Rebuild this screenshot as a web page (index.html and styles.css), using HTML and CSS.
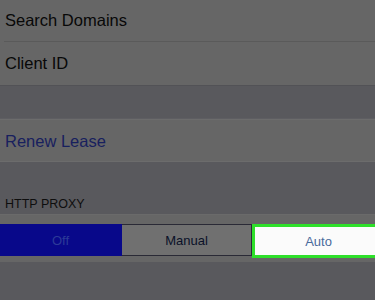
FILE: index.html
```html
<!DOCTYPE html>
<html lang="en">
<head>
<meta charset="UTF-8">
<meta name="viewport" content="width=device-width, initial-scale=1.0">
<title>Wi-Fi Settings</title>
<link rel="stylesheet" href="styles.css">
</head>
<body>

<!-- DHCP rows -->
<div class="group">
    <div class="row">Search Domains</div>
    <div class="row last">Client ID</div>
</div>

<div class="spacer"></div>

<div class="group boxed">
    <div class="row link">Renew Lease</div>
</div>

<!-- Proxy -->
<div class="section-title">HTTP PROXY</div>

<div class="group proxy-row">
    <div class="segmented">
        <div class="segment selected">Off</div>
        <div class="segment manual">Manual</div>
        <div class="segment highlight">Auto</div>
    </div>
</div>

</body>
</html>
```
FILE: styles.css
```css
* {
    box-sizing: border-box;
    margin: 0;
    padding: 0;
}

body {
    background-color: #59595d;
    font-family: "Liberation Sans", Arial, sans-serif;
    color: #080808;
    width: 375px;
    height: 300px;
    overflow: hidden;
}

.group {
    background-color: #666666;
}

.row {
    height: 42px;
    margin-left: 4px;
    padding-left: 1px;
    display: flex;
    align-items: center;
    font-size: 16.5px;
    border-bottom: 1px solid #5a5a5a;
}

.row.last {
    height: 43px;
    border-bottom: none;
}

.spacer {
    height: 34px;
    border-top: 1px solid #525256;
    border-bottom: 1px solid #5e5e62;
}

.boxed {
    border-top: 1px solid #6c6c6c;
    border-bottom: 1px solid #6c6c6c;
}

.row.link {
    height: 41px;
    padding-top: 2px;
    color: #18205e;
    border-bottom: none;
}

.section-title {
    height: 52px;
    padding: 35px 0 0 5px;
    font-size: 12.5px;
    color: #0e0e0e;
}

.proxy-row {
    height: 48px;
    padding-top: 9px;
    border-top: 1px solid #6a6a6a;
    overflow: hidden;
}

.segmented {
    display: flex;
    height: 32px;
}

.segment {
    flex: 1;
    display: flex;
    align-items: center;
    justify-content: center;
    font-size: 13px;
    background-color: #707070;
    color: #0a1028;
    border-top: 1px solid #2a2a36;
    border-bottom: 1px solid #2a2a36;
    border-right: 1px solid #2a2a36;
}

.segment.selected {
    flex: 0 0 122px;
    background-color: #08088a;
    color: #2c3a98;
    border-color: #08088a;
}

.segment.manual {
    flex: 0 0 130px;
}

.segment.highlight {
    flex: 0 0 133px;
    background-color: #fbfbfb;
    color: #4a6a9c;
    border: 3px solid #2ee02a;
    margin-bottom: -2px;
}
```
